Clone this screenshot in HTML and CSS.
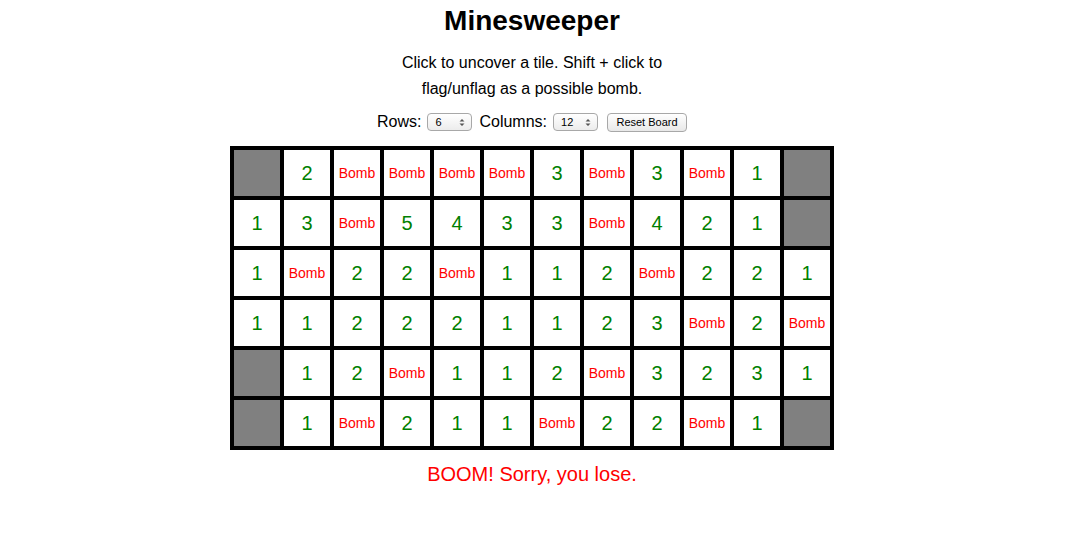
FILE: index.html
```html
<!DOCTYPE html>
<html>
<head>
<meta charset="utf-8">
<link rel="stylesheet" href="styles.css">
</head>
<body>
<main class="page">
  <h1 class="title">Minesweeper</h1>
  <p class="intro">Click to uncover a tile. Shift + click to flag/unflag as a possible bomb.</p>
  <div class="controls">
    <label class="lbl">Rows:</label>
    <span class="sel"><span class="sel-val">6</span><svg class="arrows" width="6" height="9" viewBox="0 0 6 9"><path d="M0.5 3.5 L3 1 L5.5 3.5 Z M0.5 5.5 L3 8 L5.5 5.5 Z" fill="#555"/></svg></span>
    <label class="lbl">Columns:</label>
    <span class="sel"><span class="sel-val">12</span><svg class="arrows" width="6" height="9" viewBox="0 0 6 9"><path d="M0.5 3.5 L3 1 L5.5 3.5 Z M0.5 5.5 L3 8 L5.5 5.5 Z" fill="#555"/></svg></span>
    <button class="btn">Reset Board</button>
  </div>
  <div class="board">
    <div class="cell hidden"></div><div class="cell num">2</div><div class="cell bomb">Bomb</div><div class="cell bomb">Bomb</div><div class="cell bomb">Bomb</div><div class="cell bomb">Bomb</div><div class="cell num">3</div><div class="cell bomb">Bomb</div><div class="cell num">3</div><div class="cell bomb">Bomb</div><div class="cell num">1</div><div class="cell hidden"></div>
    <div class="cell num">1</div><div class="cell num">3</div><div class="cell bomb">Bomb</div><div class="cell num">5</div><div class="cell num">4</div><div class="cell num">3</div><div class="cell num">3</div><div class="cell bomb">Bomb</div><div class="cell num">4</div><div class="cell num">2</div><div class="cell num">1</div><div class="cell hidden"></div>
    <div class="cell num">1</div><div class="cell bomb">Bomb</div><div class="cell num">2</div><div class="cell num">2</div><div class="cell bomb">Bomb</div><div class="cell num">1</div><div class="cell num">1</div><div class="cell num">2</div><div class="cell bomb">Bomb</div><div class="cell num">2</div><div class="cell num">2</div><div class="cell num">1</div>
    <div class="cell num">1</div><div class="cell num">1</div><div class="cell num">2</div><div class="cell num">2</div><div class="cell num">2</div><div class="cell num">1</div><div class="cell num">1</div><div class="cell num">2</div><div class="cell num">3</div><div class="cell bomb">Bomb</div><div class="cell num">2</div><div class="cell bomb">Bomb</div>
    <div class="cell hidden"></div><div class="cell num">1</div><div class="cell num">2</div><div class="cell bomb">Bomb</div><div class="cell num">1</div><div class="cell num">1</div><div class="cell num">2</div><div class="cell bomb">Bomb</div><div class="cell num">3</div><div class="cell num">2</div><div class="cell num">3</div><div class="cell num">1</div>
    <div class="cell hidden"></div><div class="cell num">1</div><div class="cell bomb">Bomb</div><div class="cell num">2</div><div class="cell num">1</div><div class="cell num">1</div><div class="cell bomb">Bomb</div><div class="cell num">2</div><div class="cell num">2</div><div class="cell bomb">Bomb</div><div class="cell num">1</div><div class="cell hidden"></div>
  </div>
  <p class="message">BOOM! Sorry, you lose.</p>
</main>
</body>
</html>
```

FILE: styles.css
```css
html, body {
  margin: 0;
  padding: 0;
  background: #fff;
}
body {
  font-family: "Liberation Sans", Arial, Helvetica, sans-serif;
  color: #000;
}
.page {
  display: flex;
  flex-direction: column;
  align-items: center;
  padding-top: 5px;
  padding-right: 9px;
}
.title {
  margin: 0;
  font-size: 28px;
  font-weight: bold;
  line-height: 32px;
}
.intro {
  margin: 13px 0 0;
  width: 280px;
  font-size: 16px;
  line-height: 26px;
  text-align: center;
}
.controls {
  margin-top: 8px;
  display: flex;
  align-items: center;
  height: 24px;
  font-size: 16px;
}
.lbl {
  margin-right: 6px;
}
.sel {
  position: relative;
  display: inline-flex;
  align-items: center;
  box-sizing: border-box;
  width: 45px;
  height: 18px;
  margin-right: 7px;
  border: 1px solid #a8a8a8;
  border-radius: 4px;
  background: linear-gradient(#ffffff, #ececec);
  font-size: 11px;
  padding-left: 7px;
}
.arrows {
  position: absolute;
  right: 6px;
  top: 4px;
}
.btn {
  box-sizing: border-box;
  width: 80px;
  height: 19px;
  margin-left: 2px;
  padding: 0;
  border: 1px solid #a8a8a8;
  border-radius: 4px;
  background: linear-gradient(#ffffff, #e8e8e8);
  font-family: "Liberation Sans", Arial, sans-serif;
  font-size: 11px;
  color: #000;
}
.board {
  margin-top: 12px;
  display: grid;
  grid-template-columns: repeat(12, 46px);
  grid-auto-rows: 46px;
  gap: 4px;
  padding: 4px;
  background: #000;
}
.cell {
  background: #fff;
  display: flex;
  align-items: center;
  justify-content: center;
}
.cell.hidden {
  background: #808080;
}
.cell.num {
  color: #008000;
  font-size: 20px;
}
.cell.bomb {
  color: #ff0000;
  font-size: 14px;
}
.message {
  margin: 10px 0 0;
  font-size: 20px;
  line-height: 28px;
  color: #ff0000;
}
```
